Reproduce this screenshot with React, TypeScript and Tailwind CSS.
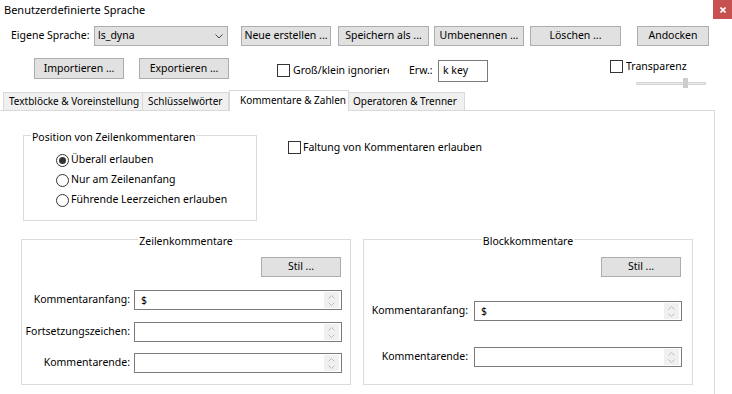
import React from 'react';

const Btn = ({ label, className }: { label: string; className: string }) => (
  <div className={`flex items-center justify-center border border-[#adadad] bg-[#e1e1e1] whitespace-nowrap ${className}`}>
    {label}
  </div>
);

const Check = () => <div className="w-[13px] h-[13px] shrink-0 border border-[#333] bg-white" />;

const Radio = ({ on }: { on?: boolean }) => (
  <div className="flex w-[13px] h-[13px] shrink-0 items-center justify-center rounded-full border border-[#333] bg-white">
    {on && <div className="w-[7px] h-[7px] rounded-full bg-[#333]" />}
  </div>
);

const Spin = () => (
  <div className="ml-auto mr-[2px] my-[1px] flex w-[15px] flex-col items-center justify-center gap-[3px] bg-[#f0f0f0]">
    <svg width="7" height="4" viewBox="0 0 7 4">
      <path d="M0.5 3.5 L3.5 0.5 L6.5 3.5" stroke="#bcbcbc" fill="none" />
    </svg>
    <svg width="7" height="4" viewBox="0 0 7 4">
      <path d="M0.5 0.5 L3.5 3.5 L6.5 0.5" stroke="#bcbcbc" fill="none" />
    </svg>
  </div>
);

const Field = ({ value }: { value?: string }) => (
  <div className="flex h-[20px] w-[208px] border border-[#7a7a7a] bg-white">
    <span className="pl-[6px] leading-[18px]">{value}</span>
    <Spin />
  </div>
);

const Legend = ({ text, center }: { text: string; center?: boolean }) => (
  <div className={`-mt-[6px] w-fit bg-white px-[1px] leading-[14px] ${center ? 'mx-auto' : 'ml-[7px]'}`}>{text}</div>
);

export default function App() {
  return (
    <div className="w-[732px] h-[394px] overflow-hidden bg-white font-['Noto_Sans',sans-serif] text-[10.5px] text-black">
      {/* title bar */}
      <div className="flex h-[20px]">
        <span className="pl-[4px] pt-[3px] leading-[14px] text-[11px]">Benutzerdefinierte Sprache</span>
        <div className="ml-auto flex w-[19px] h-[19px] items-center justify-center bg-[#c75050]">
          <svg width="6" height="6" viewBox="0 0 6 6">
            <path d="M0.5 0.5 L5.5 5.5 M5.5 0.5 L0.5 5.5" stroke="#fff" strokeWidth="1.6" />
          </svg>
        </div>
      </div>

      {/* row 1 */}
      <div className="mt-[6px] flex h-[20px] items-center">
        <span className="w-[94px] pl-[11px]">Eigene Sprache:</span>
        <div className="flex h-[20px] w-[134px] items-center border border-[#adadad] bg-[#e1e1e1] pl-[3px] pr-[4px]">
          <span>ls_dyna</span>
          <svg className="ml-auto" width="8" height="5" viewBox="0 0 8 5">
            <path d="M0.5 0.5 L4 4 L7.5 0.5" stroke="#444" fill="none" />
          </svg>
        </div>
        <Btn label="Neue erstellen ..." className="ml-[13px] w-[90px] h-[20px]" />
        <Btn label="Speichern als ..." className="ml-[7px] w-[91px] h-[20px]" />
        <Btn label="Umbenennen ..." className="ml-[5px] w-[90px] h-[20px]" />
        <Btn label="Löschen ..." className="ml-[6px] w-[91px] h-[20px]" />
        <Btn label="Andocken" className="ml-[16px] w-[72px] h-[20px]" />
      </div>

      {/* row 2 */}
      <div className="mt-[12px] flex h-[32px] items-start">
        <Btn label="Importieren ..." className="ml-[34px] w-[90px] h-[21px]" />
        <Btn label="Exportieren ..." className="ml-[15px] w-[90px] h-[21px]" />
        <div className="ml-[48px] mt-[6px] flex items-center">
          <Check />
          <span className="ml-[3px] w-[96px] overflow-hidden whitespace-nowrap leading-[13px]">Groß/klein ignorieren</span>
        </div>
        <div className="ml-[20px] mt-[2px] flex h-[22px] items-center">
          <span className="w-[29px]">Erw.:</span>
          <div className="flex h-[22px] w-[50px] items-center border border-[#7a7a7a] pl-[4px]">k key</div>
        </div>
        <div className="ml-[122px] mt-[2px] flex flex-col">
          <div className="flex items-center">
            <Check />
            <span className="ml-[3px] leading-[13px]">Transparenz</span>
          </div>
          <div className="relative ml-[26px] mt-[5px] h-[10px] w-[70px]">
            <div className="mt-[4px] h-[3px] w-full border border-[#d6d6d6] bg-[#e7e7e7]" />
            <div className="absolute left-[47px] top-0 h-[10px] w-[5px] bg-[#cdcdcd]" />
          </div>
        </div>
      </div>

      {/* tabs */}
      <div className="flex h-[20px] items-end pl-[3px] text-[10px] whitespace-nowrap">
        <div className="flex h-[18px] w-[140px] items-center border border-b-0 border-[#d9d9d9] bg-[#f0f0f0] pl-[5px]">
          Textblöcke &amp; Voreinstellung
        </div>
        <div className="flex h-[18px] w-[86px] items-center border border-l-0 border-b-0 border-[#d9d9d9] bg-[#f0f0f0] pl-[5px]">
          Schlüsselwörter
        </div>
        <div className="relative z-10 -mb-px flex h-[21px] w-[120px] items-start border border-b-0 border-[#d9d9d9] bg-white pl-[10px] pt-[3px] leading-[13px]">
          Kommentare &amp; Zahlen
        </div>
        <div className="flex h-[18px] w-[116px] items-center border border-l-0 border-b-0 border-[#d9d9d9] bg-[#f0f0f0] pl-[4px]">
          Operatoren &amp; Trenner
        </div>
      </div>

      {/* panel */}
      <div className="h-[284px] w-[715px] border-t border-r border-[#d9d9d9]">
        <div className="flex items-start">
          <div className="ml-[23px] mt-[24px] h-[86px] w-[234px] border border-[#dcdcdc]">
            <Legend text="Position von Zeilenkommentaren" />
            <div className="ml-[32px] mt-[6px] flex flex-col">
              <div className="flex h-[20px] items-center">
                <Radio on />
                <span className="ml-[2px]">Überall erlauben</span>
              </div>
              <div className="flex h-[20px] items-center">
                <Radio />
                <span className="ml-[2px]">Nur am Zeilenanfang</span>
              </div>
              <div className="flex h-[20px] items-center">
                <Radio />
                <span className="ml-[2px]">Führende Leerzeichen erlauben</span>
              </div>
            </div>
          </div>
          <div className="ml-[31px] mt-[30px] flex items-center">
            <Check />
            <span className="ml-[2px] leading-[13px]">Faltung von Kommentaren erlauben</span>
          </div>
        </div>

        <div className="mt-[18px] flex items-start">
          <div className="ml-[21px] flex h-[146px] w-[330px] flex-col border border-[#dcdcdc]">
            <Legend text="Zeilenkommentare" center />
            <Btn label="Stil ..." className="ml-auto mr-[9px] mt-[9px] w-[80px] h-[20px]" />
            <div className="mt-[13px] flex items-center">
              <span className="w-[112px] pr-[4px] text-right whitespace-nowrap">Kommentaranfang:</span>
              <Field value="$" />
            </div>
            <div className="mt-[12px] flex items-center">
              <span className="w-[112px] pr-[4px] text-right whitespace-nowrap">Fortsetzungszeichen:</span>
              <Field />
            </div>
            <div className="mt-[11px] flex items-center">
              <span className="w-[112px] pr-[4px] text-right whitespace-nowrap">Kommentarende:</span>
              <Field />
            </div>
          </div>

          <div className="ml-[12px] flex h-[146px] w-[330px] flex-col border border-[#dcdcdc]">
            <Legend text="Blockkommentare" center />
            <Btn label="Stil ..." className="ml-auto mr-[11px] mt-[9px] w-[80px] h-[20px]" />
            <div className="mt-[24px] flex items-center">
              <span className="w-[110px] pr-[6px] text-right whitespace-nowrap">Kommentaranfang:</span>
              <Field value="$" />
            </div>
            <div className="mt-[26px] flex items-center">
              <span className="w-[110px] pr-[6px] text-right whitespace-nowrap">Kommentarende:</span>
              <Field />
            </div>
          </div>
        </div>
      </div>
    </div>
  );
}
